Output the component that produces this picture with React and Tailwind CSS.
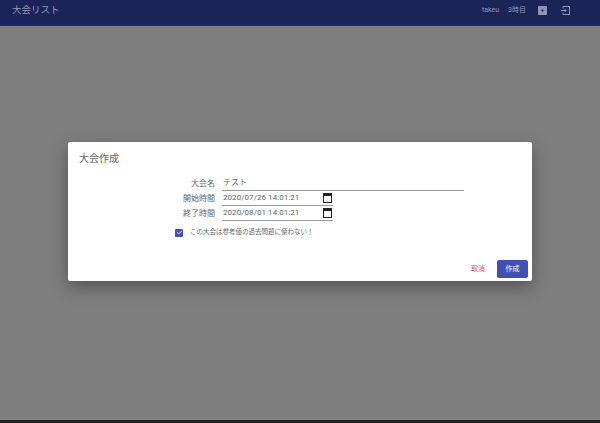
import React from 'react';
import { Check } from 'lucide-react';

const font = { fontFamily: 'Roboto, "Noto Sans CJK JP", sans-serif' };

const CalendarIcon = () => (
  <svg width="9" height="10" viewBox="0 0 9 10" className="shrink-0">
    <rect x="0.5" y="0.5" width="8" height="9" fill="none" stroke="#222" />
    <rect x="0" y="0" width="9" height="3" fill="#222" />
  </svg>
);

const DateRow = ({ label, value }) => (
  <div className="flex items-center h-[15px]">
    <span className="w-[60px] pr-[7px] text-right text-[8px] text-[#666]">{label}</span>
    <div className="w-[111px] h-[15px] flex items-center justify-between border-b border-[#999] pl-px pr-[1px]">
      <span className="text-[8px] text-[#666] tracking-[0.05px]">{value}</span>
      <CalendarIcon />
    </div>
  </div>
);

export default function App() {
  return (
    <div className="relative w-[600px] h-[423px] overflow-hidden bg-[#7f7f7f]" style={font}>
      <header className="h-[26px] flex items-center justify-between bg-[#1a2458] border-b border-[#2c2c5c] pl-[12px] pr-[30px] pb-[4px]">
        <h1 className="text-[9.5px] text-[#9096b4]">大会リスト</h1>
        <div className="flex items-center">
          <span className="text-[7px] text-[#9096b4]">takeu</span>
          <span className="ml-[9px] text-[7px] text-[#9096b4]">3時目</span>
          <span className="ml-[12px] w-[9px] h-[9px] bg-[#9096b4] rounded-[1px] flex items-center justify-center text-[8px] leading-none text-[#1a2458]">+</span>
          <svg width="9" height="9" viewBox="0 0 9 9" className="ml-[14px]" fill="none" stroke="#9096b4">
            <path d="M2 2.5V.5h6.5v8H2V6.5" />
            <path d="M0 4.5h5M3.5 3l1.5 1.5L3.5 6" />
          </svg>
        </div>
      </header>

      <div className="absolute left-[68px] top-[142px] w-[464px] h-[139px] bg-white rounded-[2px] shadow-[0_6px_18px_rgba(0,0,0,0.35)] flex flex-col">
        <h2 className="pl-[11px] pt-[10px] text-[10px] leading-[14px] text-[#666]">大会作成</h2>
        <div className="mt-[10px] pl-[94px]">
          <div className="flex items-center h-[15px]">
            <span className="w-[60px] pr-[7px] text-right text-[8px] text-[#666]">大会名</span>
            <div className="w-[242px] h-[15px] flex items-center border-b border-[#999] pl-px">
              <span className="text-[8px] text-[#666]">テスト</span>
            </div>
          </div>
          <DateRow label="開始時間" value="2020/07/26 14:01:21" />
          <DateRow label="終了時間" value="2020/08/01 14:01:21" />
          <div className="flex items-center mt-[7px] ml-[13px]">
            <span className="w-[8px] h-[8px] rounded-[1px] bg-[#3f51b5] flex items-center justify-center">
              <Check size={7} color="white" strokeWidth={3} />
            </span>
            <span className="ml-[7px] text-[6.5px] text-[#666]">この大会は参考値の過去問題に使わない！</span>
          </div>
        </div>
        <div className="mt-auto flex items-center justify-end pr-[4px] pb-[3px]">
          <span className="text-[7px] text-[#d0476f] mr-[12px]">取消</span>
          <button className="w-[31px] h-[18px] rounded-[2px] bg-[#3f51b5] text-[7px] text-white">作成</button>
        </div>
      </div>

      <div className="absolute left-0 right-0 bottom-0 h-[3px] bg-[#222]" />
    </div>
  );
}
